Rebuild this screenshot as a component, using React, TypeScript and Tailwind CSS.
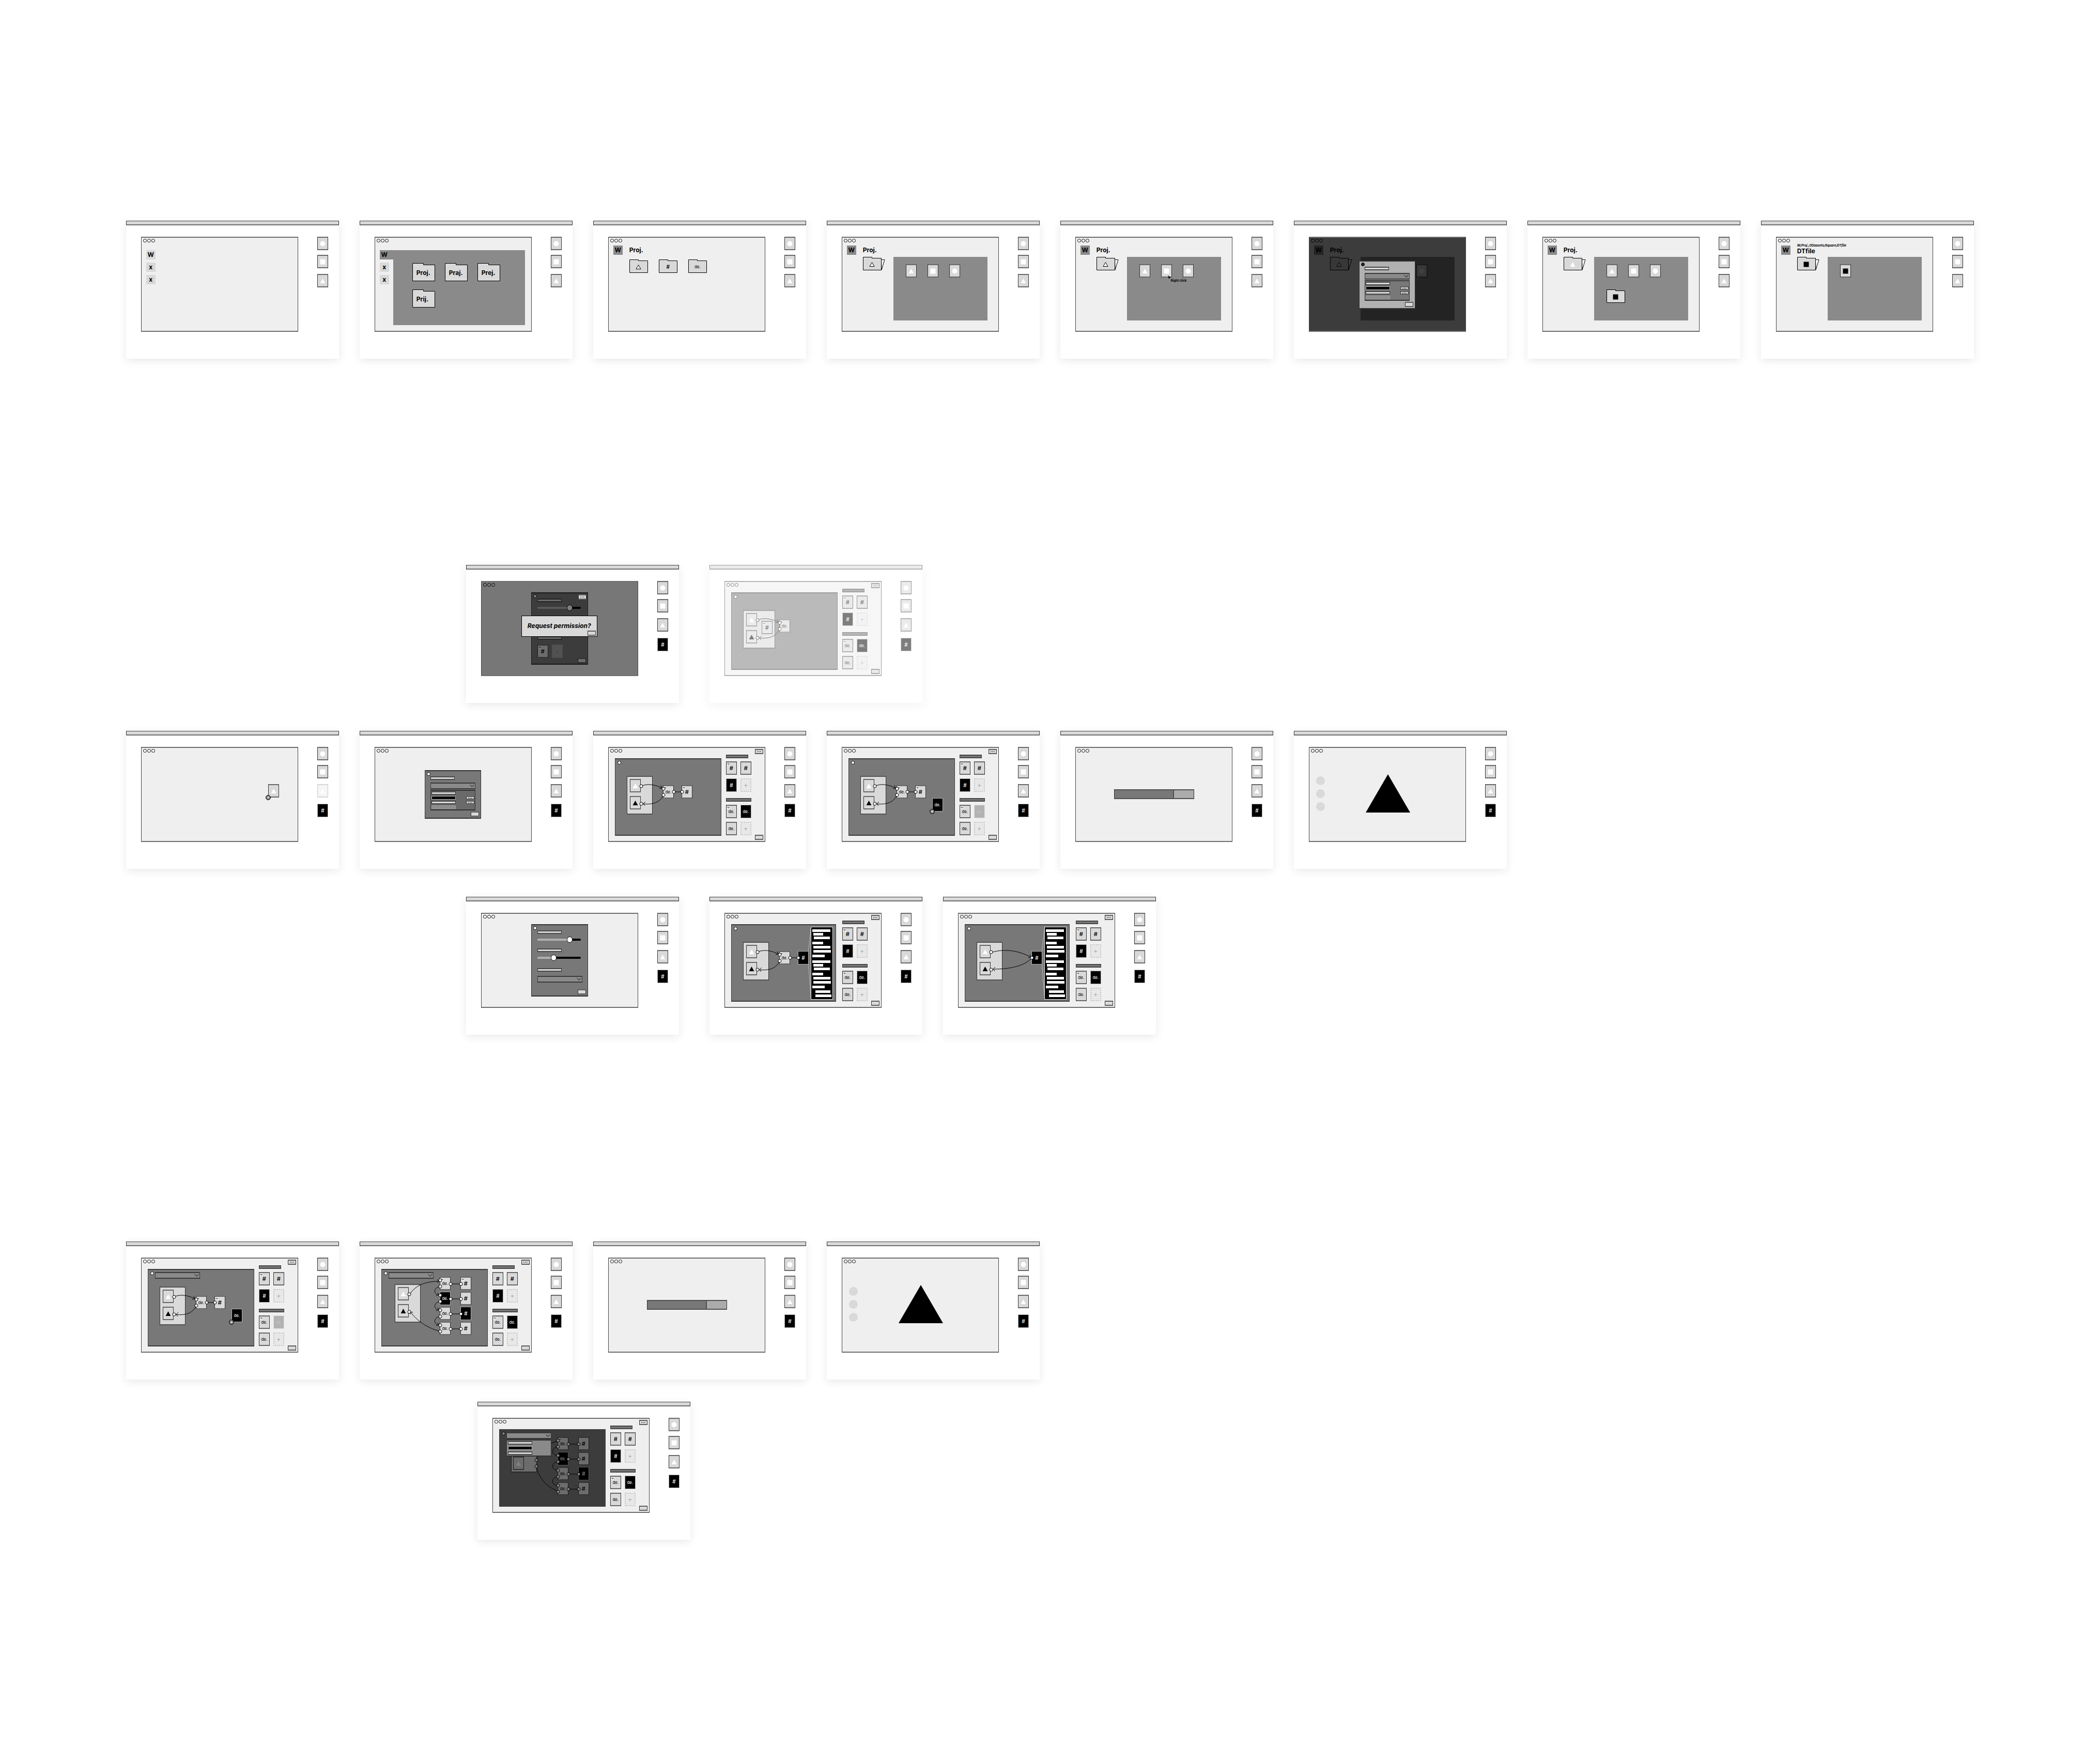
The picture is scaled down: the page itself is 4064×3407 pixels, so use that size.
import type { CSSProperties, ReactNode } from "react";

/* ---------- shapes ---------- */

type Shape = "circle" | "square" | "triangle";

function Glyph({ shape, tone = "white", outline = false }: { shape: Shape; tone?: "white" | "black"; outline?: boolean }) {
  return (
    <svg
      width="11"
      height="11"
      viewBox="0 0 11 11"
      aria-hidden="true"
      className={tone === "white" ? "fill-white" : "fill-black"}
      stroke={outline ? "#000" : "none"}
    >
      {shape === "circle" && <circle cx="5.5" cy="5.5" r="5" />}
      {shape === "square" && <rect x="0.5" y="0.5" width="10" height="10" />}
      {shape === "triangle" && <path d={outline ? "M5.5 1.5 10 9.5H1Z" : "M5.5 1 10.5 10H0.5Z"} />}
    </svg>
  );
}

function CornerMark() {
  return (
    <svg width="5" height="5" viewBox="0 0 5 5" aria-hidden="true" className="absolute left-px top-px">
      <rect width="5" height="5" fill="#fff" />
      <path d="M1 1.5H4V3H2.5M1 1v2M2 3.5H3" fill="none" stroke="#333" strokeWidth="0.8" />
    </svg>
  );
}

type TileKind = "plain" | "black" | "empty";

function Tile({
  kind = "plain",
  label,
  shape,
  tone,
  mark = false,
  faded = false,
  className = "",
  style,
}: {
  kind?: TileKind;
  label?: string;
  shape?: Shape;
  tone?: "white" | "black";
  mark?: boolean;
  faded?: boolean;
  className?: string;
  style?: CSSProperties;
}) {
  const look =
    kind === "plain"
      ? "border-x border-y-2 border-x-[#333] border-y-[#696969] bg-[#d9d9d9] text-black"
      : kind === "black"
        ? "border border-[#b0b0b0] bg-black"
        : "border-2 border-dotted border-[#c6c6c6] bg-[#e8e8e8] text-[#a4a4a4]";
  const ink = kind === "black" ? (faded ? "text-[#444]" : "text-white") : "";
  const size =
    label === "de."
      ? "text-[8px] font-normal"
      : kind === "plain"
        ? "text-[11px] font-semibold"
        : kind === "black"
          ? "text-[10px] font-medium"
          : "text-[12px]";
  return (
    <button
      type="button"
      aria-label={label ?? shape}
      style={style}
      className={`relative flex h-[26px] w-[21px] shrink-0 items-center justify-center leading-none ${look} ${ink} ${size} ${faded ? "opacity-25" : ""} ${className}`}
    >
      {mark && <CornerMark />}
      {shape ? <Glyph shape={shape} tone={tone} /> : label}
    </button>
  );
}

function Folder({
  big = false,
  open = false,
  children,
}: {
  big?: boolean;
  open?: boolean;
  children: ReactNode;
}) {
  return (
    <button
      type="button"
      className={
        big
          ? "relative flex h-[35px] w-[44px] items-center justify-start pl-2 pt-0.5"
          : "relative flex h-[26px] w-[36px] items-center justify-center pt-0.5"
      }
    >
      {big ? (
        <svg width="44" height="35" viewBox="0 0 44 35" aria-hidden="true" className="absolute left-0 top-0">
          <path d="M.5.5H21.5V3.5H43.5V34.5H.5Z" fill="#d9d9d9" stroke="#000" />
        </svg>
      ) : (
        <svg width="43" height="26" viewBox="0 0 43 26" aria-hidden="true" className="absolute left-0 top-0">
          {open && <path d="M35.5 5.5H42L36 25Z" fill="#fff" stroke="#000" />}
          <path d="M.5.5H17.5V2.5H35.5V25.5H.5Z" fill="#d9d9d9" stroke="#000" />
        </svg>
      )}
      <span className="relative flex items-center leading-none">{children}</span>
    </button>
  );
}

/* ---------- card chrome ---------- */

function Dock({ hash = false, fadedTriangle = false }: { hash?: boolean; fadedTriangle?: boolean }) {
  return (
    <nav aria-label="Dock" className="flex flex-col">
      <Tile shape="circle" />
      <Tile shape="square" className="mt-[9px]" />
      <Tile shape="triangle" className="mt-[11px]" faded={fadedTriangle} />
      {hash && <Tile kind="black" label="#" className="mt-3" />}
    </nav>
  );
}

function Card({
  children,
  menu = false,
  hash = false,
  fadedTriangle = false,
  className = "",
}: {
  children?: ReactNode;
  menu?: boolean;
  hash?: boolean;
  fadedTriangle?: boolean;
  className?: string;
}) {
  return (
    <article className={`w-[412px] shrink-0 bg-white pb-[52px] shadow-[0_4px_16px_rgba(0,0,0,0.09)] ${className}`}>
      <div className="h-[9px] border border-b-2 border-t-[#444] border-x-[#333] border-b-[#707070] bg-[#d9d9d9]" />
      <div className="flex items-start justify-between pl-[29px] pr-[21px] pt-[22px]">
        <section className="relative flex h-[184px] w-[304px] flex-col border-x border-y-2 border-x-[#444] border-y-[#6e6e6e] bg-[#efefef]">
          <header className="flex h-[13px] shrink-0 items-start justify-between px-[3px] pt-[2px]">
            <div className="flex gap-px">
              <span className="size-[7px] rounded-full border border-black bg-white" />
              <span className="size-[7px] rounded-full border border-black bg-white" />
              <span className="size-[7px] rounded-full border border-black bg-white" />
            </div>
            {menu && <SmallButton dots />}
          </header>
          {children}
        </section>
        <Dock hash={hash} fadedTriangle={fadedTriangle} />
      </div>
    </article>
  );
}

function SmallButton({ dots = false, flat = false, className = "" }: { dots?: boolean; flat?: boolean; className?: string }) {
  return (
    <button
      type="button"
      aria-label={dots ? "More" : "Confirm"}
      className={`flex w-[16px] shrink-0 items-center justify-center gap-px border-x border-y-2 border-x-[#333] border-y-[#606060] bg-[#d9d9d9] ${flat ? "h-[7px]" : "h-[10px]"} ${className}`}
    >
      {dots && (
        <svg width="8" height="2" viewBox="0 0 8 2" aria-hidden="true">
          <path d="M0 .5h1.5v1H0zM3 .5h1.5v1H3zM6 .5h1.5v1H6z" fill="#000" />
        </svg>
      )}
    </button>
  );
}

function Bar({ className = "" }: { className?: string }) {
  return <div className={`h-[7px] border-x border-y-2 border-x-[#333] border-y-[#484848] ${className}`} />;
}

function Dropdown({ className = "", style }: { className?: string; style?: CSSProperties }) {
  return (
    <div className={`relative h-[13px] w-[87px] ${className}`} style={style}>
      <select
        aria-label="Options"
        className="block h-full w-full appearance-none border-x border-y-2 border-[#3a3a3a] bg-[#8a8a8a] text-[8px]"
      />
      <svg width="9" height="5" viewBox="0 0 9 5" aria-hidden="true" className="absolute right-[2px] top-[4px]">
        <path d="M.5.5 4.5 4 8.5.5" fill="none" stroke="#000" />
      </svg>
    </div>
  );
}

/* ---------- file browser ---------- */

function Workspace({ dim = false, children = "W" }: { dim?: boolean; children?: string }) {
  return (
    <span
      className={`flex size-[18px] shrink-0 items-center justify-center text-[12px] font-bold leading-none ${dim ? "bg-[#8a8a8a]" : "bg-[#d9d9d9]"}`}
    >
      {children}
    </span>
  );
}

function Heading({ path, title }: { path?: string; title: string }) {
  return (
    <div className="flex items-center gap-[13px] pl-[9px] pt-[2px]">
      <Workspace dim />
      <div className="flex flex-col">
        {path && <p className="-mt-[5px] text-[6px] font-bold italic leading-[8px]">{path}</p>}
        <h2 className="text-[12px] font-bold leading-[14px]">{title}</h2>
      </div>
    </div>
  );
}

function FolderView({
  title,
  path,
  folderGlyph,
  children,
}: {
  title: string;
  path?: string;
  folderGlyph: ReactNode;
  children: ReactNode;
}) {
  return (
    <>
      <Heading title={title} path={path} />
      <div className="flex items-start gap-[23px] pl-[40px] pt-1">
        <Folder open>{folderGlyph}</Folder>
        <div className="h-[123px] w-[182px] bg-[#8a8a8a] pl-6 pt-[14px]">{children}</div>
      </div>
    </>
  );
}

function ShapeRow() {
  return (
    <div className="flex gap-[21px]">
      <Tile shape="triangle" />
      <Tile shape="square" />
      <Tile shape="circle" />
    </div>
  );
}

/* ---------- dialogs ---------- */

function AssetDialog({ light = false }: { light?: boolean }) {
  return (
    <div
      className={`flex h-[94px] w-[109px] flex-col border-x border-y-2 border-[#333] px-[3px] py-[2px] ${light ? "bg-[#b1b1b1]" : "bg-[#787878]"}`}
    >
      <span className={`size-[7px] shrink-0 rounded-full border border-black ${light ? "bg-[#222]" : "bg-white"}`} />
      <div className="flex flex-col pl-[7px] pt-px">
        <Bar className="w-[47px] bg-[#d9d9d9]" />
        <Dropdown className="mt-[5px]" />
        <div
          className={`mt-px flex h-[40px] w-[87px] flex-col gap-[2px] border-x border-y-2 border-[#333] p-px ${light ? "bg-[#787878]" : "bg-[#6a6a6a]"}`}
        >
          <Bar className="w-[47px] bg-[#d9d9d9]" />
          <div className="flex justify-between">
            <div className="h-[7px] w-[47px] border border-[#b0b0b0] bg-black" />
            <SmallButton dots flat />
          </div>
          <div className="flex justify-between">
            <Bar className="w-[47px] bg-[#d9d9d9]" />
            <SmallButton dots flat />
          </div>
          <div className="h-[7px] w-[47px] border border-dotted border-[#b0b0b0] bg-[#8c8c8c]" />
        </div>
      </div>
      <SmallButton className="mt-auto self-end" />
    </div>
  );
}

const rangeBase =
  "block h-3 w-[84px] appearance-none bg-transparent [&::-webkit-slider-runnable-track]:h-1 [&::-webkit-slider-runnable-track]:rounded-full [&::-webkit-slider-thumb]:-mt-1 [&::-webkit-slider-thumb]:h-3 [&::-webkit-slider-thumb]:w-[11px] [&::-webkit-slider-thumb]:appearance-none [&::-webkit-slider-thumb]:rounded-full [&::-webkit-slider-thumb]:border [&::-webkit-slider-thumb]:border-black [&::-webkit-slider-thumb]:bg-white";

function SettingsPanel({ tiles = false }: { tiles?: boolean }) {
  return (
    <div className="mx-auto mt-[7px] flex h-[140px] w-[110px] shrink-0 flex-col border-x border-y-2 border-[#333] bg-[#787878] px-[3px] pb-[2px] pt-[2px]">
      <span className="size-[7px] shrink-0 rounded-full border border-black bg-white" />
      <div className="flex flex-col pl-2 pt-px">
        <Bar className="w-[47px] bg-[#d9d9d9]" />
        <input
          type="range"
          aria-label="Amount"
          defaultValue={78}
          className={`mt-[5px] ${rangeBase} [&::-webkit-slider-runnable-track]:bg-[linear-gradient(to_right,#b0b0b0_75%,#000_75%)]`}
        />
        <Bar className="mt-[11px] w-[47px] bg-[#d9d9d9]" />
        <input
          type="range"
          aria-label="Detail"
          defaultValue={36}
          className={`mt-[5px] ${rangeBase} [&::-webkit-slider-runnable-track]:bg-[linear-gradient(to_right,#b0b0b0_37%,#000_37%)]`}
        />
        <Bar className="mt-[14px] w-[47px] bg-[#d9d9d9]" />
        {tiles ? (
          <div className="mt-[9px] flex gap-[7px]">
            <Tile label="#" mark />
            <Tile kind="empty" label="+" className="opacity-40" />
          </div>
        ) : (
          <Dropdown className="mt-2" />
        )}
      </div>
      <SmallButton className="mt-auto self-end" />
    </div>
  );
}

/* ---------- node editor ---------- */

/* Top-left corner of the drawing area, in card coordinates. */
const ORIGIN_X = 43;
const ORIGIN_Y = 55;
const at = (x: number, y: number): CSSProperties => ({ left: x - ORIGIN_X, top: y - ORIGIN_Y });

function Node({ x, y, ...tile }: { x: number; y: number; kind?: TileKind; label?: string; shape?: Shape; tone?: "white" | "black"; mark?: boolean }) {
  return (
    <div className="absolute" style={at(x, y)}>
      <Tile {...tile} />
    </div>
  );
}

function Group({ x = 65, y = 87, wide = false }: { x?: number; y?: number; wide?: boolean }) {
  return (
    <div
      style={at(x, y)}
      className={`absolute flex h-[75px] flex-col gap-[7px] border-x border-y-2 border-x-[#333] border-y-[#555] bg-[#d9d9d9] pl-[5px] pt-1 ${wide ? "w-[62px]" : "w-[50px]"}`}
    >
      <Tile shape="triangle" />
      <Tile shape="triangle" tone="black" />
    </div>
  );
}

type Point = [number, number];

function Wires({ paths, heads = [], ports }: { paths: string[]; heads?: string[]; ports: Point[] }) {
  return (
    <svg
      width="204"
      height="146"
      viewBox={`${ORIGIN_X} ${ORIGIN_Y} 204 146`}
      aria-hidden="true"
      className="absolute left-0 top-0 overflow-visible"
      fill="none"
      stroke="#000"
    >
      {paths.concat(heads).map((d) => (
        <path key={d} d={d} />
      ))}
      {ports.map(([x, y]) => (
        <circle key={`${x}-${y}`} cx={x} cy={y} r="3" fill="#fff" />
      ))}
    </svg>
  );
}

const loopPaths = ["M93 107C105 101 121 104 136 112", "M136 124C128 141 112 143 93 141"];
const loopHeads = ["M131 105.5 133 111 128 111.5", "M101 137 97 141 100 145"];
const loopPorts: Point[] = [
  [93, 107],
  [93, 141],
  [136, 112],
  [136, 124],
];

function DragTile({ x, y, children }: { x: number; y: number; children: ReactNode }) {
  return (
    <div className="absolute" style={at(x, y)}>
      {children}
      <svg width="10" height="10" viewBox="0 0 10 10" aria-hidden="true" className="absolute -left-[5px] top-[21px]">
        <circle cx="5" cy="5" r="4.5" fill="#777" stroke="#000" />
        <path d="M5 2.5v5M2.5 5h5" stroke="#fff" />
      </svg>
    </div>
  );
}

function Editor({
  narrow = false,
  firstMark = true,
  blackFaded = false,
  children,
}: {
  narrow?: boolean;
  firstMark?: boolean;
  blackFaded?: boolean;
  children: ReactNode;
}) {
  return (
    <div className="flex min-h-0 flex-1 items-start pl-3">
      <div
        className={`relative mt-[7px] h-[150px] shrink-0 border-x border-y-2 border-[#3c3c3c] bg-[#787878] ${narrow ? "mr-3 w-[203px]" : "mr-[9px] w-[206px]"}`}
      >
        <span className="absolute left-1 top-[3px] size-[7px] rounded-full border border-black bg-white" />
        {children}
      </div>
      <aside className="flex w-[49px] shrink-0 flex-col">
        <Bar className="w-[43px] bg-[#787878]" />
        <div className="mt-[6px] flex flex-wrap gap-[7px]">
          <Tile label="#" mark={firstMark} />
          <Tile label="#" />
          <Tile kind="black" label="#" />
          <Tile kind="empty" label="+" />
        </div>
        <Bar className="mt-3 w-[49px] bg-[#787878]" />
        <div className="mt-[6px] flex flex-wrap gap-[7px]">
          <Tile label="de." mark />
          <Tile kind="black" label="de." faded={blackFaded} />
          <Tile label="de." />
          <Tile kind="empty" label="+" />
        </div>
      </aside>
      <SmallButton className="mb-[2px] ml-auto mr-[3px] self-end" />
    </div>
  );
}

function BasicGraph() {
  return (
    <>
      <Group />
      <Node x={135} y={105} label="de." mark />
      <Node x={171} y={105} label="#" mark />
      <Wires paths={[...loopPaths, "M156 118H172"]} heads={loopHeads} ports={[...loopPorts, [156, 118], [172, 118]]} />
    </>
  );
}

const codeLines: [number, number, number][] = [
  [3, 5, 35],
  [5, 12, 19],
  [6, 19, 31],
  [3, 29, 21],
  [5, 37, 33],
  [5, 45, 34],
  [3, 54, 24],
  [3, 65, 35],
  [5, 72, 19],
  [6, 79, 31],
  [3, 89, 21],
  [5, 97, 33],
  [5, 105, 34],
  [3, 114, 24],
  [9, 123, 29],
  [9, 131, 31],
];

function CodePanel() {
  return (
    <svg width="48" height="141" viewBox="0 0 48 141" aria-label="Code" role="img" className="absolute" style={at(191, 58)}>
      <path d="M.5 48 5.5.5M.5 72 5.5 140" stroke="#b8b8b8" fill="none" />
      <rect x="5.5" y=".5" width="42" height="140" fill="#000" stroke="#e4e4e4" />
      {codeLines.map(([x, y, w]) => (
        <rect key={y} x={x + 5} y={y} width={w} height="5" fill="#fff" />
      ))}
    </svg>
  );
}

const columnRows = [68, 97, 126, 155];
const columnPorts: Point[] = columnRows.flatMap(
  (y): Point[] => [
    [156, y + 7],
    [156, y + 19],
    [176, y + 14],
    [196, y + 14],
  ],
);
const columnLinks = columnRows.map((y) => `M176 ${y + 14}H196`);
const columnArcs = columnRows.slice(0, 3).map((y) => `M155 ${y + 19}C143 ${y + 21} 142 ${y + 34} 154 ${y + 36}`);
const columnHeads = columnRows.slice(0, 3).map((y) => `M151 ${y + 31} 153 ${y + 35} 148 ${y + 36.5}`);

function ColumnNodes({ hashMark = false }: { hashMark?: boolean }) {
  return (
    <>
      <Node x={155} y={68} label="de." mark />
      <Node x={155} y={97} label="de." kind="black" />
      <Node x={155} y={126} label="de." />
      <Node x={155} y={155} label="de." />
      <Node x={195} y={68} label="#" mark={hashMark} />
      <Node x={195} y={97} label="#" />
      <Node x={195} y={126} label="#" kind="black" />
      <Node x={195} y={155} label="#" />
    </>
  );
}

/* ---------- render states ---------- */

function ProgressCard() {
  return (
    <Card hash>
      <div
        role="progressbar"
        aria-label="Rendering"
        aria-valuenow={75}
        className="ml-[74px] mt-[67px] flex h-[19px] w-[155px] border-x border-y-2 border-x-[#333] border-y-[#505050] bg-[#ababab]"
      >
        <div className="w-3/4 border-r-2 border-[#505050] bg-[#787878]" />
      </div>
    </Card>
  );
}

function ResultCard() {
  return (
    <Card hash>
      <div className="flex items-center pl-[13px] pt-[38px]">
        <div className="flex flex-col gap-2">
          <span className="size-[17px] rounded-full bg-[#d9d9d9]" />
          <span className="size-[17px] rounded-full bg-[#d9d9d9]" />
          <span className="size-[17px] rounded-full bg-[#d9d9d9]" />
        </div>
        <svg width="86" height="74" viewBox="0 0 86 74" aria-label="Triangle" role="img" className="ml-[79px]">
          <path d="M43 0 86 74H0Z" />
        </svg>
      </div>
    </Card>
  );
}

/* ---------- board ---------- */

export default function App() {
  return (
    <main className="min-h-screen bg-white px-[6%] pb-[428px] pt-[427px] font-['Inter','Liberation_Sans',sans-serif] text-black">
      <section aria-label="Browse files" className="flex gap-10">
        <Card>
          <div className="flex flex-col gap-[6px] pl-[9px] pt-[11px]">
            <Workspace />
            <Workspace>x</Workspace>
            <Workspace>x</Workspace>
          </div>
        </Card>
        <Card>
          <div className="flex pl-[9px] pt-[11px]">
            <div className="flex w-[26px] flex-col gap-[6px]">
              <div className="bg-[#8a8a8a]">
                <Workspace dim />
              </div>
              <Workspace>x</Workspace>
              <Workspace>x</Workspace>
            </div>
            <div className="grid h-[145px] w-[255px] grid-cols-[44px_44px_44px] content-start gap-x-[19px] gap-y-4 bg-[#8a8a8a] pl-[37px] pt-[25px] text-[12px] font-bold">
              <Folder big>Proj.</Folder>
              <Folder big>Praj.</Folder>
              <Folder big>Prej.</Folder>
              <Folder big>Prij.</Folder>
            </div>
          </div>
        </Card>
        <Card>
          <Heading title="Proj." />
          <div className="flex gap-[21px] pl-[40px] pt-[9px]">
            <Folder>
              <Glyph shape="triangle" outline />
            </Folder>
            <Folder>
              <span className="text-[10px] font-semibold">#</span>
            </Folder>
            <Folder>
              <span className="text-[8px]">de.</span>
            </Folder>
          </div>
        </Card>
        <Card>
          <FolderView title="Proj." folderGlyph={<Glyph shape="triangle" outline />}>
            <ShapeRow />
          </FolderView>
        </Card>
        <Card>
          <FolderView title="Proj." folderGlyph={<Glyph shape="triangle" outline />}>
            <div className="relative">
              <ShapeRow />
              <div className="absolute left-[55px] top-[22px] flex">
                <svg width="6" height="7" viewBox="0 0 6 7" aria-hidden="true">
                  <path d="M.5 0 6 4 3.5 4.5 2 7Z" />
                </svg>
                <span className="mt-[6px] whitespace-nowrap text-[6px] font-bold leading-[8px]">Right click</span>
              </div>
            </div>
          </FolderView>
        </Card>
        <Card>
          <FolderView title="Proj." folderGlyph={<Glyph shape="triangle" outline />}>
            <ShapeRow />
          </FolderView>
          <div className="absolute inset-0 flex flex-col items-center bg-black/75 pt-[44px]">
            <AssetDialog light />
          </div>
        </Card>
        <Card>
          <FolderView title="Proj." folderGlyph={<Glyph shape="triangle" />}>
            <ShapeRow />
            <div className="mt-[23px]">
              <Folder>
                <Glyph shape="square" tone="black" />
              </Folder>
            </div>
          </FolderView>
        </Card>
        <Card>
          <FolderView title="DTfile" path="W/Proj./3Dassets/Square/DTfile" folderGlyph={<Glyph shape="square" tone="black" />}>
            <Tile shape="square" tone="black" />
          </FolderView>
        </Card>
      </section>

      <section aria-label="Permission" className="ml-[658px] mt-[399px] flex gap-[59px]">
        <Card hash>
          <SettingsPanel tiles />
          <div className="absolute inset-0 bg-black/50">
            <SmallButton dots className="absolute left-[187px] top-[24px]" />
            <div
              role="dialog"
              aria-label="Request permission?"
              className="absolute left-[77px] top-[65px] flex h-[41px] w-[147px] flex-col items-center border border-black bg-[#d9d9d9] pt-[11px]"
            >
              <p className="whitespace-nowrap text-[12px] font-bold italic leading-4">Request permission?</p>
              <SmallButton className="mr-[2px] mt-px self-end" />
            </div>
          </div>
        </Card>
        <Card hash menu className="opacity-50">
          <Editor>
            <Group wide />
            <Node x={101} y={108} label="#" mark />
            <Node x={135} y={105} label="de." mark />
            <Wires paths={[...loopPaths, "M136 112V124"]} heads={loopHeads} ports={loopPorts} />
          </Editor>
        </Card>
      </section>

      <section aria-label="Create" className="mt-[54px] flex gap-10">
        <Card hash fadedTriangle>
          <div className="relative ml-[245px] mt-[57px] w-[21px]">
            <Tile shape="triangle" />
            <svg width="10" height="10" viewBox="0 0 10 10" aria-hidden="true" className="absolute -left-[5px] top-[21px]">
              <circle cx="5" cy="5" r="4.5" fill="#777" stroke="#000" />
              <path d="M5 2.5v5M2.5 5h5" stroke="#fff" />
            </svg>
          </div>
        </Card>
        <Card hash>
          <div className="flex justify-center pt-[30px]">
            <AssetDialog />
          </div>
        </Card>
        <Card hash menu>
          <Editor>
            <BasicGraph />
          </Editor>
        </Card>
        <Card hash menu>
          <Editor blackFaded>
            <BasicGraph />
            <DragTile x={204} y={130}>
              <Tile kind="black" label="de." />
            </DragTile>
          </Editor>
        </Card>
        <ProgressCard />
        <ResultCard />
      </section>

      <section aria-label="Configure" className="ml-[658px] mt-[54px] flex gap-10">
        <Card hash className="mr-[19px]">
          <SettingsPanel />
        </Card>
        <Card hash menu>
          <Editor narrow>
            <Group />
            <Node x={135} y={105} label="de." mark />
            <Node x={171} y={105} label="#" kind="black" />
            <Wires paths={[...loopPaths, "M156 118H172"]} heads={loopHeads} ports={[...loopPorts, [156, 118], [172, 118]]} />
            <CodePanel />
          </Editor>
        </Card>
        <Card hash menu>
          <Editor narrow>
            <Group />
            <Node x={171} y={105} label="#" kind="black" />
            <Wires
              paths={["M93 108C117 100 146 103 172 118", "M172 118C158 134 130 140 97 140"]}
              heads={["M168 112 170 117 165 118", "M101 136 97 140 100 144"]}
              ports={[
                [93, 107],
                [93, 141],
                [172, 118],
              ]}
            />
            <CodePanel />
          </Editor>
        </Card>
      </section>

      <section aria-label="Combine" className="mt-[400px] flex gap-10">
        <Card hash menu>
          <Editor blackFaded>
            <div className="absolute" style={at(56, 59)}>
              <Dropdown />
            </div>
            <BasicGraph />
            <DragTile x={204} y={130}>
              <Tile kind="black" label="de." />
            </DragTile>
          </Editor>
        </Card>
        <Card hash menu>
          <Editor firstMark={false}>
            <div className="absolute" style={at(56, 59)}>
              <Dropdown />
            </div>
            <Group x={68} y={82} />
            <ColumnNodes hashMark />
            <Wires
              paths={["M97 102C108 85 126 77 154 77", "M156 174C135 168 115 158 98 136", ...columnLinks, ...columnArcs]}
              heads={["M150 73.5 154 77 150 80", "M98 140.5 98.5 136 103 137", ...columnHeads]}
              ports={[[96, 102], [96, 136], ...columnPorts]}
            />
          </Editor>
        </Card>
        <ProgressCard />
        <ResultCard />
      </section>

      <section aria-label="Inspect" className="ml-[680px] mt-[43px] flex">
        <Card hash menu>
          <Editor firstMark={false}>
            <div
              style={at(65, 87)}
              className="absolute flex h-[50px] w-[50px] items-end border-x border-y-2 border-x-[#333] border-y-[#555] bg-[#d9d9d9] pb-[3px] pl-[3px]"
            >
              <Tile shape="triangle" />
            </div>
            <ColumnNodes />
            <Wires
              paths={["M114 113C120 96 130 82 156 76", "M114 125C118 146 132 164 156 173", ...columnLinks, ...columnArcs]}
              ports={[[114, 113], [114, 125], ...columnPorts]}
            />
            <div className="absolute inset-0 bg-black/50" />
            <div className="absolute" style={at(56, 59)}>
              <Dropdown />
              <div className="mt-px flex h-[33px] w-[87px] flex-col gap-[3px] border-x border-y-2 border-[#333] bg-[#8a8a8a] pl-[2px] pt-px">
                <Bar className="w-[47px] bg-[#d9d9d9]" />
                <div className="h-[7px] w-[47px] border border-[#b0b0b0] bg-black" />
                <Bar className="w-[47px] bg-[#d9d9d9]" />
              </div>
            </div>
          </Editor>
        </Card>
      </section>
    </main>
  );
}
